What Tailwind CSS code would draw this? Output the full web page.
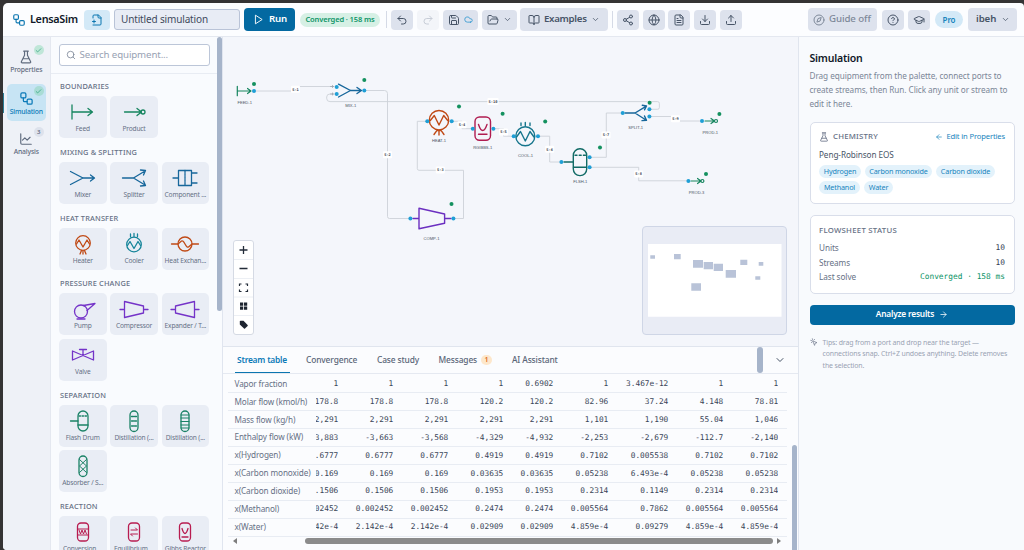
<!DOCTYPE html>
<html lang="en">
<head>
<meta charset="utf-8">
<title>LensaSim</title>
<script src="https://cdn.jsdelivr.net/npm/@tailwindcss/browser@4"></script>
</head>
<body class="h-[550px] w-[1024px] overflow-hidden bg-[#343334] font-['Noto_Sans',sans-serif] text-[#475467]">

<!-- Icon library -->
<svg class="hidden">
  <symbol id="flow" viewBox="0 0 24 24"><rect x="3" y="3" width="8" height="8" rx="2"/><path d="M7 11v4a2 2 0 0 0 2 2h4"/><rect x="13" y="13" width="8" height="8" rx="2"/></symbol>
  <symbol id="newfile" viewBox="0 0 24 24"><path d="M4 22h14a2 2 0 0 0 2-2V7l-5-5H6a2 2 0 0 0-2 2v4M14 2v4a2 2 0 0 0 2 2h4M3 15h6M6 12v6"/></symbol>
  <symbol id="play" viewBox="0 0 24 24"><path d="M6 3l14 9-14 9z"/></symbol>
  <symbol id="undo" viewBox="0 0 24 24"><path d="M9 14 4 9l5-5M4 9h10.5a5.5 5.5 0 0 1 0 11H11"/></symbol>
  <symbol id="redo" viewBox="0 0 24 24"><path d="m15 14 5-5-5-5M20 9H9.500a5.500 5.500 0 0 0 0 11H13"/></symbol>
  <symbol id="save" viewBox="0 0 24 24"><path d="M15.200 3a2 2 0 0 1 1.400.600l3.800 3.800a2 2 0 0 1 .600 1.400V19a2 2 0 0 1-2 2H5a2 2 0 0 1-2-2V5a2 2 0 0 1 2-2zM17 21v-7a1 1 0 0 0-1-1H8a1 1 0 0 0-1 1v7M7 3v4a1 1 0 0 0 1 1h7"/></symbol>
  <symbol id="cloud" viewBox="0 0 24 24"><path d="M17.500 19H9a7 7 0 1 1 6.710-9h1.790a4.500 4.500 0 1 1 0 9Z"/></symbol>
  <symbol id="folder" viewBox="0 0 24 24"><path d="m6 14 1.500-2.900A2 2 0 0 1 9.240 10H20a2 2 0 0 1 1.940 2.500l-1.540 6a2 2 0 0 1-1.950 1.500H4a2 2 0 0 1-2-2V5a2 2 0 0 1 2-2h3.900a2 2 0 0 1 1.690.9l.81 1.200a2 2 0 0 0 1.670.9H18a2 2 0 0 1 2 2v2"/></symbol>
  <symbol id="chev" viewBox="0 0 24 24"><path d="m6 9 6 6 6-6"/></symbol>
  <symbol id="book" viewBox="0 0 24 24"><path d="M12 7v14M3 18a1 1 0 0 1-1-1V4a1 1 0 0 1 1-1h5a4 4 0 0 1 4 4 4 4 0 0 1 4-4h5a1 1 0 0 1 1 1v13a1 1 0 0 1-1 1h-6a3 3 0 0 0-3 3 3 3 0 0 0-3-3z"/></symbol>
  <symbol id="share" viewBox="0 0 24 24"><circle cx="18" cy="5" r="3"/><circle cx="6" cy="12" r="3"/><circle cx="18" cy="19" r="3"/><path d="m8.600 13.500 6.800 4M15.400 6.500l-6.800 4"/></symbol>
  <symbol id="globe" viewBox="0 0 24 24"><circle cx="12" cy="12" r="10"/><path d="M12 2a14.500 14.500 0 0 0 0 20 14.500 14.500 0 0 0 0-20M2 12h20"/></symbol>
  <symbol id="doc" viewBox="0 0 24 24"><path d="M15 2H6a2 2 0 0 0-2 2v16a2 2 0 0 0 2 2h12a2 2 0 0 0 2-2V7zM14 2v4a2 2 0 0 0 2 2h4M10 9H8M16 13H8M16 17H8"/></symbol>
  <symbol id="down" viewBox="0 0 24 24"><path d="M21 15v4a2 2 0 0 1-2 2H5a2 2 0 0 1-2-2v-4M7 10l5 5 5-5M12 15V3"/></symbol>
  <symbol id="up" viewBox="0 0 24 24"><path d="M21 15v4a2 2 0 0 1-2 2H5a2 2 0 0 1-2-2v-4M17 8l-5-5-5 5M12 3v12"/></symbol>
  <symbol id="compass" viewBox="0 0 24 24"><circle cx="12" cy="12" r="10"/><path d="m16.200 7.800-2.100 6.300-6.300 2.100 2.100-6.300z"/></symbol>
  <symbol id="help" viewBox="0 0 24 24"><circle cx="12" cy="12" r="10"/><path d="M9.100 9a3 3 0 0 1 5.800 1c0 2-3 3-3 3M12 17h.010"/></symbol>
  <symbol id="cap" viewBox="0 0 24 24"><path d="M21.420 10.920a1 1 0 0 0-.020-1.840L12.830 5.180a2 2 0 0 0-1.660 0L2.600 9.080a1 1 0 0 0 0 1.830l8.570 3.910a2 2 0 0 0 1.660 0zM22 10v6M6 12.500V16a6 3 0 0 0 12 0v-3.500"/></symbol>
  <symbol id="flask" viewBox="0 0 24 24"><path d="M8 2h8M9.500 2v7L4 20a1.400 1.400 0 0 0 1.300 2h13.400a1.400 1.400 0 0 0 1.300-2L14.500 9V2M7 15h10"/></symbol>
  <symbol id="chart" viewBox="0 0 24 24"><path d="M3 3v16a2 2 0 0 0 2 2h16M6 14l4-4 4 4 5-5"/></symbol>
  <symbol id="check" viewBox="0 0 24 24"><path d="M20 6 9 17l-5-5"/></symbol>
  <symbol id="search" viewBox="0 0 24 24"><circle cx="11" cy="11" r="8"/><path d="m21 21-4.300-4.300"/></symbol>
  <symbol id="left" viewBox="0 0 24 24"><path d="m12 19-7-7 7-7M19 12H5"/></symbol>
  <symbol id="right" viewBox="0 0 24 24"><path d="M5 12h14M12 5l7 7-7 7"/></symbol>
  <symbol id="click" viewBox="0 0 24 24"><path d="M14 4.100 12 6M5.100 8l-2.900-.8M6 12l-1.900 2M7.200 2.200 8 5.100M9 9l12 5-5.500 1.500L14 21z"/></symbol>
</svg>

<div class="ml-[3px] mt-[3px] flex h-[547px] w-[1021px] flex-col overflow-hidden rounded-tl-[5px] rounded-tr-[4px] rounded-bl-[4px] bg-[#fcfdff]">

  <!-- Toolbar -->
  <header class="flex h-[34px] shrink-0 items-center border-b border-[#e4e8f0] pl-[9px] whitespace-nowrap [&_svg]:fill-none [&_svg]:stroke-current [&_svg]:stroke-2 [&_svg]:[stroke-linecap:round] [&_svg]:[stroke-linejoin:round]">
    <svg class="size-[14px] text-[#0b76b0]"><use href="#flow"/></svg>
    <span class="ml-[4px] w-[50px] text-[10.800px] font-semibold tracking-[-0.280px] text-[#101828]">LensaSim</span>
    <div class="ml-[4px] flex h-[20px] w-[26px] items-center justify-center rounded-[4px] bg-[#d3e9f7] text-[#0b76b0]"><svg class="size-[12px]"><use href="#newfile"/></svg></div>
    <div class="ml-[4px] flex h-[21.500px] w-[126px] items-center rounded-[3px] border border-[#b9c3d7] bg-[#e8ecf5] pl-[6px] text-[10px] tracking-[-0.150px] text-[#3f4a5c]">Untitled simulation</div>
    <div class="ml-[4px] flex h-[23px] w-[51px] items-center rounded-[4px] bg-[#0369a1] pl-[9px] text-white"><svg class="size-[11px]"><use href="#play"/></svg><span class="ml-[5px] text-[9.700px] font-semibold tracking-[-0.200px]">Run</span></div>
    <div class="ml-[5px] flex h-[14px] w-[80px] items-center justify-center rounded-full bg-[#d6f0e5] text-[7.500px] font-semibold tracking-[-0.120px] text-[#0d9467]">Converged · 158 ms</div>
    <div class="ml-[6px] h-[17px] w-px bg-[#d5dae6]"></div>
    <div class="ml-[4px] flex h-[20px] w-[22px] items-center justify-center rounded-[4px] bg-[#dde2ed]"><svg class="size-[12px]"><use href="#undo"/></svg></div>
    <div class="ml-[4px] flex h-[20px] w-[22px] items-center justify-center rounded-[4px] bg-[#f3f5f9] text-[#c6ccd6]"><svg class="size-[12px]"><use href="#redo"/></svg></div>
    <div class="ml-[4px] flex h-[20px] w-[35px] items-center justify-center gap-[4px] rounded-[4px] bg-[#dde2ed]"><svg class="size-[12px]"><use href="#save"/></svg><svg class="size-[9px] text-[#2292ce]"><use href="#cloud"/></svg></div>
    <div class="ml-[3.500px] flex h-[20px] w-[35px] items-center justify-center gap-[4px] rounded-[4px] bg-[#dde2ed]"><svg class="size-[12px]"><use href="#folder"/></svg><svg class="size-[9px]"><use href="#chev"/></svg></div>
    <div class="ml-[3.500px] flex h-[23px] w-[88px] items-center rounded-[4px] bg-[#dde2ed] pl-[8px]"><svg class="size-[12px]"><use href="#book"/></svg><span class="ml-[4px] w-[43px] text-[9.700px] font-semibold tracking-[-0.300px]">Examples</span><svg class="ml-[4px] size-[9px]"><use href="#chev"/></svg></div>
    <div class="ml-[4px] h-[17px] w-px bg-[#d5dae6]"></div>
    <div class="ml-[4px] flex gap-[3.700px]">
      <div class="flex h-[20px] w-[22px] items-center justify-center rounded-[4px] bg-[#dde2ed]"><svg class="size-[12px]"><use href="#share"/></svg></div>
      <div class="flex h-[20px] w-[22px] items-center justify-center rounded-[4px] bg-[#dde2ed]"><svg class="size-[12px]"><use href="#globe"/></svg></div>
      <div class="flex h-[20px] w-[22px] items-center justify-center rounded-[4px] bg-[#dde2ed]"><svg class="size-[12px]"><use href="#doc"/></svg></div>
      <div class="flex h-[20px] w-[22px] items-center justify-center rounded-[4px] bg-[#dde2ed]"><svg class="size-[12px]"><use href="#down"/></svg></div>
      <div class="flex h-[20px] w-[22px] items-center justify-center rounded-[4px] bg-[#dde2ed]"><svg class="size-[12px]"><use href="#up"/></svg></div>
    </div>
    <div class="mr-[7px] ml-auto flex items-center">
      <div class="flex h-[23px] w-[69px] items-center rounded-[4px] bg-[#dde2ed] pl-[5px] text-[#7e8999]"><svg class="size-[12px]"><use href="#compass"/></svg><span class="ml-[4px] text-[9.700px] font-medium tracking-[-0.100px]">Guide off</span></div>
      <div class="ml-[5px] flex h-[20px] w-[22px] items-center justify-center rounded-[4px] bg-[#dde2ed]"><svg class="size-[12px]"><use href="#help"/></svg></div>
      <div class="ml-[4px] flex h-[20px] w-[22px] items-center justify-center rounded-[4px] bg-[#dde2ed]"><svg class="size-[12px]"><use href="#cap"/></svg></div>
      <div class="ml-[5px] flex h-[17px] w-[28px] items-center justify-center rounded-full bg-[#d3e9f7] text-[8px] font-semibold tracking-[-0.100px] text-[#1784bd]">Pro</div>
      <div class="ml-[5px] flex h-[23px] w-[49px] items-center rounded-[4px] bg-[#dde2ed] pl-[8px] text-[9.700px] font-semibold tracking-[-0.100px]"><span class="w-[21px]">ibeh</span><svg class="ml-[4px] size-[9px]"><use href="#chev"/></svg></div>
    </div>
  </header>

  <div class="flex min-h-0 flex-1">

    <!-- Mode rail -->
    <nav class="flex w-[48px] shrink-0 flex-col items-center border-r border-[#e4e8f0] bg-[#eef1f7] pt-[6px] pr-[0.500px] text-[6.800px] tracking-[-0.160px] [&_svg]:fill-none [&_svg]:stroke-current [&_svg]:stroke-2 [&_svg]:[stroke-linecap:round] [&_svg]:[stroke-linejoin:round]">
      <div class="relative flex h-[37px] w-[39px] flex-col items-center pt-[7px] text-[#5f6b7e]">
        <svg class="size-[14px] [stroke-width:1.700]"><use href="#flask"/></svg><span class="leading-[11px] font-medium">Properties</span>
        <span class="absolute top-[2px] right-[2px] flex size-[10px] items-center justify-center rounded-full bg-[#bfe6d8] text-[#0d9467]"><svg class="size-[7px]"><use href="#check"/></svg></span>
      </div>
      <div class="relative mt-[4px] flex h-[37px] w-[39px] flex-col items-center rounded-[5px] bg-[#c7e4f4] pt-[7px] text-[#0b7ab8]">
        <span class="absolute top-[9px] -left-[4.500px] h-[20px] w-[2px] bg-[#2c7d95]"></span>
        <svg class="size-[15px]"><use href="#flow"/></svg><span class="-mt-[0.500px] leading-[11px] font-medium">Simulation</span>
        <span class="absolute top-[2px] right-[2px] flex size-[10px] items-center justify-center rounded-full bg-[#a9dcd5] text-[#0d9467]"><svg class="size-[7px]"><use href="#check"/></svg></span>
      </div>
      <div class="relative mt-[4px] flex h-[37px] w-[39px] flex-col items-center pt-[7px] text-[#5f6b7e]">
        <svg class="size-[14px]"><use href="#chart"/></svg><span class="leading-[11px] font-medium">Analysis</span>
        <span class="absolute top-[2px] right-[2px] flex size-[10px] items-center justify-center rounded-full bg-[#dde2ec] text-[6px] font-semibold">3</span>
      </div>
    </nav>

    <!-- Equipment palette -->
    <aside class="flex w-[172px] shrink-0 border-r border-[#e0e5ef] bg-[#f9fbfe]">
      <div class="flex w-[166px] flex-col">
        <div class="flex h-[37px] shrink-0 items-center border-b border-[#e8ecf3] pl-[7.500px]">
          <div class="flex h-[22px] w-[151px] items-center rounded-[3px] border border-[#bcc6d8] bg-white pl-[6px] text-[#98a2b3]">
            <svg class="size-[10px] fill-none stroke-[#7d8899] stroke-2 [stroke-linecap:round]"><use href="#search"/></svg>
            <span class="ml-[4px] text-[9.700px] tracking-[-0.120px]">Search equipment...</span>
          </div>
        </div>
        <div id="palette" class="flex flex-col overflow-hidden pl-[8px]"></div>
      </div>
      <div class="mt-0 h-[274px] w-[5px] rounded-full bg-[#a6b4ca]"></div>
    </aside>

    <!-- Workspace -->
    <main class="flex w-[575px] shrink-0 flex-col">
      <section class="relative h-[309px] shrink-0 bg-[#f4f6fb]">
        <svg id="sheet" class="block h-[309px] w-[575px]" viewBox="223 37 575 309" fill="none" stroke-linecap="round" stroke-linejoin="round">
          <g stroke="#cdd1d8" stroke-width=".9">
            <path d="M256 91H295.500V86.500H334"/>
            <path d="M337 94H330Q326.700 94 326.700 97V98.500Q326.700 101.600 330 101.600H657.500Q659.400 101.600 659.400 103.500V107.500Q659.400 109.300 657.500 109.300H651"/>
            <path d="M366 90.500H384.500Q387.500 90.500 387.500 93.500V216.500Q387.500 218.500 389.500 218.500H409"/>
            <path d="M455 218.500H463.500V170.300H419Q417.300 170.300 417.300 168.500V121.300H426"/>
            <path d="M453 121.300H462V128.700H471M495 128.700H503.500V136.200H512M540 136.200H549.700V162H560"/>
            <path d="M591 157.300H606.300V113H621M591 167.300H638.700V180.800H687M651 116.500H675.500V121H700"/>
          </g>
          <g stroke="#9aa1ab" stroke-width=".8"><path d="M330.500 86.500h3M332.500 85.500v2M330.500 94h3M332.500 93v2"/></g>
          <!-- stream tags -->
          <g id="tags" fill="#fff"></g>
          <!-- units -->
          <g stroke="#16855f" stroke-width="1.200"><path d="M237.300 86.300V95.700M237.300 91H250.500M247.500 88.500L251 91L247.500 93.500"/>
            <path d="M705 121H713.500M711 118.500L714.500 121L711 123.500"/><circle cx="716" cy="121" r="1.500"/>
            <path d="M691 181H700M697.500 178.500L701 181L697.500 183.500"/><circle cx="702.400" cy="181" r="1.500"/></g>
          <g stroke="#17679b" stroke-width="1.400"><path d="M338.500 84.200L350.500 90.500L338.500 97M350.500 90.500H361M357 87.500L361.500 90.500L357 93.500"/>
            <path d="M625 113H635L646 106.300M635 113L646 120M642.300 105.300L646.500 106L644.500 109.800M644.500 116L646.500 120.300L642 120.600"/></g>
          <g stroke="#c04a16" stroke-width="1.400"><circle cx="439" cy="120.200" r="9.700"/><path d="M430.300 120.500L434.300 115.500L439 125L443.700 115.500L447.700 120.500M439 131V135M436.800 130.600L434 134.500M441.200 130.600L444 134.500M437 130.500H441"/></g>
          <g stroke="#b01c50" stroke-width="1.400"><rect x="475" y="117" width="15.500" height="23.200" rx="4.500"/><path d="M478.500 124.500Q480.500 130.500 482.700 130.500T487 124.500M478.500 134.300H487"/></g>
          <g stroke="#16758c" stroke-width="1.400"><circle cx="525.300" cy="136.200" r="9.500"/><path d="M516.500 137L520.500 131.500L525.300 141L530 131.500L534 137M521 123V125.500M525.300 122.500V125.500M530 123V125.500"/></g>
          <g stroke="#6b2fc0" stroke-width="1.400"><path d="M419 208.300L444.600 214V223.200L419 228.800ZM413 218.500H419M444.600 218.500H451"/></g>
          <g stroke="#116b66" stroke-width="1.400"><rect x="573.300" y="148.800" width="13.400" height="26.800" rx="6.500"/><path d="M564 162H573.300M573.500 167.300H586.500"/><path d="M575 155.300H586" stroke-dasharray="2 2.200"/></g>
          <!-- ports -->
          <g fill="#1f9fd6"><circle cx="254" cy="91" r="2"/><circle cx="336.700" cy="87" r="2"/><circle cx="336.700" cy="94" r="2"/><circle cx="364.300" cy="90.500" r="2"/><circle cx="410.400" cy="218.500" r="2"/><circle cx="453.400" cy="218.500" r="2"/><circle cx="427.300" cy="121.300" r="2"/><circle cx="451.700" cy="121.300" r="2"/><circle cx="472.800" cy="128.700" r="2"/><circle cx="493.400" cy="128.700" r="2"/><circle cx="513.700" cy="136.200" r="2"/><circle cx="538" cy="136.200" r="2"/><circle cx="561.400" cy="162" r="2"/><circle cx="589.600" cy="157.300" r="2"/><circle cx="589.600" cy="167.300" r="2"/><circle cx="622.700" cy="113" r="2"/><circle cx="649.400" cy="109.300" r="2"/><circle cx="649.400" cy="116.500" r="2"/><circle cx="702" cy="121" r="2"/><circle cx="688.400" cy="181" r="2"/></g>
          <g fill="#14915f"><circle cx="254" cy="84" r="2"/><circle cx="364.300" cy="80" r="2"/><circle cx="451.500" cy="204" r="2"/><circle cx="459" cy="106.500" r="2"/><circle cx="502.600" cy="113.700" r="2"/><circle cx="545.200" cy="121.500" r="2"/><circle cx="600" cy="147.500" r="2"/><circle cx="649.600" cy="102.700" r="2"/><circle cx="719.400" cy="114" r="2"/><circle cx="706" cy="174" r="2"/></g>
          <g fill="#4b5563" class="font-['Liberation_Sans',sans-serif] text-[4.100px]" text-anchor="middle"><text x="244.700" y="104">FEED-1</text><text x="350.700" y="106.500">MIX-1</text><text x="439" y="142">HEAT-1</text><text x="482.700" y="149">RGIBBS-1</text><text x="525.500" y="157">COOL-1</text><text x="580.300" y="183">FLSH-1</text><text x="635.700" y="129">SPLIT-1</text><text x="710.300" y="134">PROD-1</text><text x="696.500" y="194">PROD-3</text><text x="431.500" y="239.500">COMP-1</text></g>
        </svg>

        <!-- Zoom controls -->
        <div class="absolute top-[203px] left-[10px] h-[95px] w-[21px] overflow-hidden rounded-[3px] border border-[#d5dae4] bg-white">
          <svg class="block h-[93px] w-[19px] fill-none" viewBox="0 0 19 93"><path d="M0 18.500H19M0 37.500H19M0 56H19M0 74.500H19" stroke="#eceff4"/><path d="M9.500 5V13M5.500 9H13.500M5.500 27.500H13.500" stroke="#222b38" stroke-width="1.300"/><path d="M5.500 45V43H7.500M11.500 43H13.500V45M13.500 48.500V50.500H11.500M7.500 50.500H5.500V48.500" stroke="#222b38" stroke-width="1.200"/><path d="M6 61.500h3.200v3.200H6zM10 61.500h3.200v3.200H10zM6 65.500h3.200v3.200H6zM10 65.500h3.200v3.200H10z" fill="#1d2430"/><path d="M5.800 80.500Q5.800 79.800 6.500 79.800H9.500L13.600 84Q14 84.500 13.600 85L11 87.600Q10.500 88 10 87.600L5.800 83.500Z" fill="#1d2430"/></svg>
        </div>

        <!-- Minimap -->
        <div class="absolute top-[189px] left-[419px] h-[109px] w-[145px] rounded-[4px] border border-[#cfd6e6] bg-[#e9ecf5]">
          <svg class="block h-[107px] w-[143px]" viewBox="643 227 143 107"><path fill="#fff" d="M648 244h133.500v72.700H648z"/><path fill="#b9c3d8" d="M650.300 255.300h4.700v3.400h-4.700zM674 254h6.700v5.300H674zM693 260h10v7.700h-10zM703.700 262h9.300v7.300h-9.300zM713.700 263.700h9.300v7.300h-9.300zM725.700 270H736v7.700h-10.300zM740.300 259.700h7v5.300h-7zM758.700 262h4.600v3.700h-4.600zM755.300 276.300h5v3.400h-5zM691.300 283.300h9.700v7.400h-9.700z"/></svg>
        </div>
      </section>

      <!-- Results panel -->
      <section class="flex min-h-0 flex-1 flex-col border-t border-[#e0e5ee] bg-[#fbfcfe]">
        <div class="flex h-[27px] shrink-0 items-stretch border-b border-[#e5e9f1] pl-[11.500px] text-[8.400px] leading-[26px] font-medium tracking-[-0.120px] whitespace-nowrap text-[#5a6678]">
          <div class="w-[55px] border-b-[1.500px] border-[#0b76b0] text-center font-semibold tracking-[-0.200px] text-[#0b7ab8]">Stream table</div>
          <div class="ml-[16.500px] w-[54px]">Convergence</div>
          <div class="ml-[17px] w-[45px]">Case study</div>
          <div class="ml-[16.500px] w-[38px]">Messages</div>
          <div class="mt-[8px] ml-[4.500px] h-[10px] w-[11px] rounded-full bg-[#fde7cb] text-center text-[7px] leading-[10px] font-semibold text-[#dd6b20]">1</div>
          <div class="ml-[20px] w-[50px]">AI Assistant</div>
          <div class="ml-[195px] h-[26px] w-[6px] rounded-full bg-[#a6b4ca]"></div>
          <svg class="mt-[7px] ml-[11px] size-[12px] fill-none stroke-[#475467] stroke-2 [stroke-linecap:round] [stroke-linejoin:round]"><use href="#chev"/></svg>
        </div>
        <div class="flex min-h-0 flex-1 justify-between">
          <div class="ml-[5px] w-[559px]">
            <div id="rows" class="pt-[1.500px]"></div>
            <div class="flex h-[8px] items-center">
              <svg class="ml-[5px] h-[6px] w-[4px] fill-[#7d7d7d]" viewBox="0 0 4 6"><path d="M4 0V6L0 3z"/></svg>
              <div class="ml-[67.500px] h-[6px] w-[468.500px] rounded-full bg-[#8b8b8b]"></div>
              <svg class="ml-[4px] h-[6px] w-[4px] fill-[#7d7d7d]" viewBox="0 0 4 6"><path d="M0 0V6L4 3z"/></svg>
            </div>
          </div>
          <div class="mt-[71px] mr-[1px] w-[5px] rounded-t-full bg-[#a6b4ca]"></div>
        </div>
      </section>
    </main>

    <!-- Inspector -->
    <aside class="flex w-[226px] shrink-0 flex-col border-l border-[#e0e5ee] bg-[#f8fafd] pr-[9.500px] pl-[10.500px] [&_svg]:fill-none [&_svg]:stroke-current [&_svg]:stroke-2 [&_svg]:[stroke-linecap:round] [&_svg]:[stroke-linejoin:round]">
      <h2 class="mt-[13px] text-[10.500px] leading-[16px] font-semibold tracking-[-0.200px] text-[#101828]">Simulation</h2>
      <p class="mt-[3px] text-[8.200px] leading-[14px] tracking-[-0.060px] whitespace-nowrap text-[#7b8697]">Drag equipment from the palette, connect ports to<br>create streams, then Run. Click any unit or stream to<br>edit it here.</p>
      <div class="mt-[10.500px] h-[82px] shrink-0 rounded-[5px] border border-[#d9deea] bg-white px-[8.500px] pt-[8px] whitespace-nowrap">
        <div class="flex h-[13px] items-center">
          <svg class="size-[10px] text-[#667085]"><use href="#flask"/></svg>
          <span class="ml-[4px] text-[7.800px] font-medium tracking-[0.200px] text-[#667085]">CHEMISTRY</span>
          <svg class="ml-auto size-[8px] text-[#1784bd]"><use href="#left"/></svg>
          <span class="ml-[3px] text-[7.600px] tracking-[-0.140px] text-[#1784bd]">Edit in Properties</span>
        </div>
        <div class="mt-[4px] text-[8.200px] leading-[14px] tracking-[-0.080px]">Peng-Robinson EOS</div>
        <div class="mt-[3px] flex flex-wrap gap-x-[4px] gap-y-[3.500px] text-[7.200px] leading-[13px] tracking-[-0.140px] text-[#1784bd]">
          <span class="w-[42px] rounded-full bg-[#e3f2fb] text-center">Hydrogen</span><span class="w-[67px] rounded-full bg-[#e3f2fb] text-center">Carbon monoxide</span><span class="w-[59px] rounded-full bg-[#e3f2fb] text-center">Carbon dioxide</span><span class="w-[41px] rounded-full bg-[#e3f2fb] text-center">Methanol</span><span class="w-[29px] rounded-full bg-[#e3f2fb] text-center">Water</span>
        </div>
      </div>
      <div class="mt-[11px] h-[79px] shrink-0 rounded-[5px] border border-[#d9deea] bg-white px-[8.500px] pt-[7.500px] text-[8.200px] leading-[14.500px] tracking-[-0.060px] text-[#667085]">
        <div class="mb-[4px] text-[7.800px] leading-[14px] font-medium tracking-[0.260px]">FLOWSHEET STATUS</div>
        <div class="flex justify-between"><span>Units</span><span class="font-['DejaVu_Sans_Mono',monospace] text-[7.850px] tracking-normal text-[#344054]">10</span></div>
        <div class="flex justify-between"><span>Streams</span><span class="font-['DejaVu_Sans_Mono',monospace] text-[7.850px] tracking-normal text-[#344054]">10</span></div>
        <div class="flex justify-between"><span>Last solve</span><span class="font-['DejaVu_Sans_Mono',monospace] text-[7.850px] tracking-normal text-[#0d9467]">Converged · 158 ms</span></div>
      </div>
      <button class="mt-[11px] flex h-[20px] shrink-0 items-center justify-center gap-[5px] rounded-[4px] bg-[#0369a1] text-[8.300px] font-semibold tracking-[-0.180px] text-white">Analyze results<svg class="size-[9px]"><use href="#right"/></svg></button>
      <div class="mt-[12px] flex gap-[5px] text-[6.950px] leading-[11.500px] tracking-[-0.120px] whitespace-nowrap text-[#98a2b3]">
        <svg class="mt-[1px] size-[8px] shrink-0 text-[#667085]"><use href="#click"/></svg>
        <p>Tips: drag from a port and drop near the target —<br>connections snap. Ctrl+Z undoes anything. Delete removes<br>the selection.</p>
      </div>
    </aside>
  </div>
</div>

<script>
const G = '#16855f', B = '#17679b', O = '#c04a16', T = '#16859a', P = '#7433c8', E = '#1a8266', R = '#b81c50';
// Each glyph is drawn in a 30 x 24 box centred on (15,12).
const sections = [
  ['BOUNDARIES', [
    ['Feed', G, '<path d="M4 5V19M4 12H24M20 8.500L24.500 12L20 15.500"/>'],
    ['Product', G, '<path d="M5.500 12H21M18 8.500L22.500 12L18 15.500"/><circle cx="24" cy="12" r="2"/>']]],
  ['MIXING &amp; SPLITTING', [
    ['Mixer', B, '<path d="M2.500 5.500L15 12L2.500 18.500M15 12H26M22.500 9L26.500 12L22.500 15"/>'],
    ['Splitter', B, '<path d="M3.500 12H14.500L26 5M14.500 12L26 19M21.500 4L26.500 4.500L24.500 9M24.500 15L26.500 19.500L21.500 20"/>'],
    ['Component ...', B, '<path d="M8.500 4.500H21.500V19.500H8.500ZM3 12H8.500M21.500 7H27M21.500 17H27"/><path stroke-dasharray="2 1" d="M15 4.500V19.500"/>']]],
  ['HEAT TRANSFER', [
    ['Heater', O, '<circle cx="15" cy="11" r="7.300"/><path d="M8.500 12L11 8L15 15L19 8L21.500 12M15 19V22M13.500 18.500L12 22M16.500 18.500L18 22"/>'],
    ['Cooler', T, '<circle cx="15" cy="12.500" r="7.300"/><path d="M8.500 13.500L11 9.500L15 16.500L19 9.500L21.500 13.500M11.500 2V4.500M15 1.500V4.500M18.500 2V4.500"/>'],
    ['Heat Exchan...', O, '<circle cx="15" cy="12" r="7"/><path d="M1.500 12H8L11.500 9Q13 8 15 12T18.500 15L22 12H28.500"/>']]],
  ['PRESSURE CHANGE', [
    ['Pump', P, '<circle cx="13" cy="14.500" r="6.500"/><path d="M15.500 8.500L27 6.500L19 13.500M9 22H17"/>'],
    ['Compressor', P, '<path d="M5.500 4.500L24.500 9V16L5.500 20.500ZM1 12.500H5.500M24.500 12.500H29"/>'],
    ['Expander / T...', P, '<path d="M24.500 4.500L5.500 9V16L24.500 20.500ZM1 12.500H5.500M24.500 12.500H29"/>'],
    ['Valve', P, '<path d="M4.500 8V17L25.500 8V17ZM15 12.500V6.500M11.500 6.500H18.500"/>']]],
  ['SEPARATION', [
    ['Flash Drum', E, '<rect x="10" y="2" width="10" height="20" rx="5"/><path d="M2.500 12H10M10 16H20"/><path d="M11 7H20" stroke-dasharray="1.500 1.500"/>'],
    ['Distillation (...', E, '<rect x="11" y="2" width="8" height="20.500" rx="4"/><path d="M12.500 7.500H18M12.500 12H18M12.500 17H18" stroke-dasharray="2 1"/>'],
    ['Distillation (...', E, '<rect x="11" y="2" width="8" height="20.500" rx="4"/><path d="M11 6H19M11 9H19M11 12.500H19M11 16H19M11 19H19" stroke-width="1"/>'],
    ['Absorber / S...', E, '<rect x="11" y="2" width="8" height="20.500" rx="4"/><path d="M11.500 5.500L18.500 12L11.500 18.500M18.500 5.500L11.500 12L18.500 18.500" stroke-width="1"/>']]],
  ['REACTION', [
    ['Conversion ...', R, '<rect x="9.500" y="3" width="11" height="18" rx="3.500"/><path d="M9.500 9H20.500M9.500 15H20.500M11 10L12.500 14L14 10L15.500 14L17 10L18.500 14" stroke-width="1"/>'],
    ['Equilibrium ...', R, '<rect x="9.500" y="3" width="11" height="18" rx="3.500"/><path d="M12 10H18.500L16.500 8M18.500 14H11.500L13.500 16" stroke-width="1"/>'],
    ['Gibbs Reactor', R, '<rect x="9.500" y="3" width="11" height="18" rx="3.500"/><path d="M12 8.500Q13.500 13.500 15 13.500T18 8.500M12 17H18"/>']]],
];
document.getElementById('palette').innerHTML = sections.map(([title, items], i) => `
  <div class="${i ? 'h-[23.800px]' : 'h-[22px]'} flex shrink-0 items-end pb-[4px] pl-[1px] text-[7.400px] leading-[12px] font-medium tracking-[0.160px] text-[#667085]">${title}</div>
  <div class="grid shrink-0 grid-cols-[repeat(3,47.500px)] gap-x-[3.800px] gap-y-[3.400px]">${items.map(([name, color, glyph]) => `
    <div class="flex h-[42px] flex-col items-center rounded-[5px] bg-[#e9edf5] pt-[4px]">
      <svg class="h-[24px] w-[30px]" viewBox="0 0 30 24" fill="none" stroke="${color}" stroke-width="1.300" stroke-linecap="round" stroke-linejoin="round">${glyph}</svg>
      <span class="text-[6.600px] leading-[10px] tracking-[-0.160px] whitespace-nowrap text-[#667085]">${name}</span>
    </div>`).join('')}</div>`).join('');

const tags = [['S-1',295.5,89.3],['S-2',387.5,154.7],['S-3',440.3,170],['S-4',462,124.7],['S-5',503.5,132],['S-6',549.7,149.3],['S-7',606,135],['S-8',638.7,174],['S-9',675.5,118.7],['S-10',493,101.5]];
document.getElementById('tags').innerHTML = tags.map(([t, x, y]) => {
  const w = t.length * 2.2 + 2.4;
  return `<rect x="${x - w / 2}" y="${y - 3.5}" width="${w}" height="7" rx="1"/><text class="font-['DejaVu_Sans_Mono',monospace] text-[3.700px] font-bold" fill="#3c4450" text-anchor="middle" x="${x}" y="${y + 1.3}">${t}</text>`;
}).join('');

const table = [
  ['Vapor fraction', '1','1','1','1','0.6902','1','3.467e-12','1','1'],
  ['Molar flow (kmol/h)', '178.8','178.8','178.8','120.2','120.2','82.96','37.24','4.148','78.81'],
  ['Mass flow (kg/h)', '2,291','2,291','2,291','2,291','2,291','1,101','1,190','55.04','1,046'],
  ['Enthalpy flow (kW)', '-3,883','-3,663','-3,568','-4,329','-4,932','-2,253','-2,679','-112.7','-2,140'],
  ['x(Hydrogen)', '0.6777','0.6777','0.6777','0.4919','0.4919','0.7102','0.005538','0.7102','0.7102'],
  ['x(Carbon monoxide)', '0.169','0.169','0.169','0.03635','0.03635','0.05238','6.493e-4','0.05238','0.05238'],
  ['x(Carbon dioxide)', '0.1506','0.1506','0.1506','0.1953','0.1953','0.2314','0.1149','0.2314','0.2314'],
  ['x(Methanol)', '0.002452','0.002452','0.002452','0.2474','0.2474','0.005564','0.7862','0.005564','0.005564'],
  ['x(Water)', '2.142e-4','2.142e-4','2.142e-4','0.02909','0.02909','4.859e-4','0.09279','4.859e-4','4.859e-4'],
];
document.getElementById('rows').innerHTML = table.map(([name, ...v]) => `
  <div class="flex h-[17.900px] items-center border-b border-[#e8ecf3] whitespace-nowrap">
    <div class="w-[88px] shrink-0 pl-[6.500px] text-[8.200px] tracking-[-0.120px] text-[#667085]">${name}</div>
    <div class="grid grid-cols-[22.300px_55px_55px_55px_50px_55px_60px_55px_55px] overflow-hidden font-['DejaVu_Sans_Mono',monospace] text-[7.800px] text-[#3a4558]">${v.map(x => `<span class="flex justify-end">${x}</span>`).join('')}</div>
  </div>`).join('');
</script>
</body>
</html>
